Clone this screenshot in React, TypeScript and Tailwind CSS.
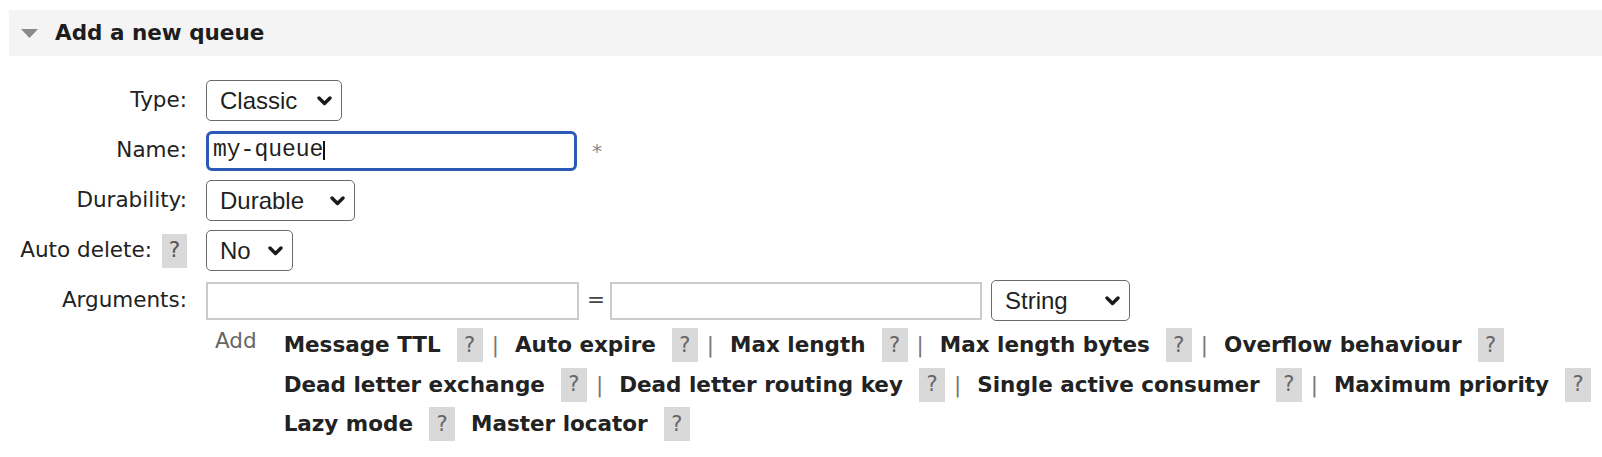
import React from "react";

function Chevron() {
    return (
        <svg width="15" height="10" viewBox="0 0 15 10" className="shrink-0">
            <path d="M2 2 L7.5 7.5 L13 2" fill="none" stroke="#1a1a1a" strokeWidth="3.4" strokeLinecap="round" strokeLinejoin="round" />
        </svg>
    );
}

function FakeSelect({ value, width }: { value: string; width: string }) {
    return (
        <div className={`${width} h-[41px] flex items-center justify-between bg-white border border-[#6b6b6b] rounded-[5px] pl-[13px] pr-[9px] font-['Liberation_Sans',Arial,sans-serif] text-[24px] text-[#1f1f1f]`}>
            <span>{value}</span>
            <Chevron />
        </div>
    );
}

function Help() {
    return (
        <span className="ml-[16px] w-[26px] h-[34px] bg-[#d9d9d9] flex items-center justify-center text-[#666] font-normal text-[21px]">
            ?
        </span>
    );
}

function Pipe() {
    return <span className="ml-[9px] mr-[16px] text-[#777] font-normal">|</span>;
}

function Row({ label, children, help }: { label: string; children: React.ReactNode; help?: boolean }) {
    return (
        <div className="flex items-center h-[50px]">
            <div className="w-[187px] flex justify-end items-center">
                <span>{label}</span>
                {help && (
                    <span className="ml-[10px] w-[25px] h-[34px] bg-[#d9d9d9] flex items-center justify-center text-[#555]">?</span>
                )}
            </div>
            <div className="ml-[19px] flex items-center">{children}</div>
        </div>
    );
}

// argument shortcuts, one array per line
const lines: { name: string; pipe: boolean }[][] = [
    [
        { name: "Message TTL", pipe: true },
        { name: "Auto expire", pipe: true },
        { name: "Max length", pipe: true },
        { name: "Max length bytes", pipe: true },
        { name: "Overflow behaviour", pipe: false },
    ],
    [
        { name: "Dead letter exchange", pipe: true },
        { name: "Dead letter routing key", pipe: true },
        { name: "Single active consumer", pipe: true },
        { name: "Maximum priority", pipe: false },
    ],
    [
        { name: "Lazy mode", pipe: false },
        { name: "Master locator", pipe: false },
    ],
];

export default function App() {
    return (
        <div className="w-[1602px] h-[457px] bg-white font-['DejaVu_Sans',Verdana,sans-serif] text-[21.5px] text-[#222] overflow-hidden">
            <div className="pt-[10px] pl-[9px]">
                <div className="h-[46px] bg-[#f4f4f4] flex items-center">
                    <svg width="17" height="9" viewBox="0 0 17 9" className="ml-[12px]">
                        <path d="M0 0 L17 0 L8.5 9 Z" fill="#8a8a8a" />
                    </svg>
                    <h2 className="ml-[17px] font-bold text-[21.5px] text-[#1d1d1d]">Add a new queue</h2>
                </div>
            </div>

            <div className="mt-[19.5px]">
                <Row label="Type:">
                    <FakeSelect value="Classic" width="w-[136px]" />
                </Row>
                <Row label="Name:">
                    <div className="w-[371px] h-[40px] border-[3px] border-[#2a59b6] rounded-[6px] flex items-center pl-[4px] font-['Liberation_Mono',monospace] text-[23px] text-[#1f1f1f]">
                        <span>my-queue</span>
                        <span className="w-[1.5px] h-[19px] bg-[#111]" />
                    </div>
                    <span className="ml-[15px] text-[#888] text-[20px]">*</span>
                </Row>
                <Row label="Durability:">
                    <FakeSelect value="Durable" width="w-[149px]" />
                </Row>
                <Row label="Auto delete:" help>
                    <FakeSelect value="No" width="w-[87px]" />
                </Row>
                <Row label="Arguments:">
                    <div className="w-[373px] h-[38px] border-2 border-[#cbcbcb] bg-white" />
                    <span className="ml-[8px] mr-[5px] text-[#444]">=</span>
                    <div className="w-[372px] h-[38px] border-2 border-[#cbcbcb] bg-white" />
                    <div className="ml-[9px]">
                        <FakeSelect value="String" width="w-[139px]" />
                    </div>
                </Row>
            </div>

            <div className="flex pl-[215px]">
                <div className="h-[39.5px] flex items-center -mt-[4px] text-[#666]">Add</div>
                <div className="ml-[27px] flex flex-col">
                    {lines.map((line, i) => (
                        <div key={i} className="h-[39.5px] flex items-center font-bold whitespace-nowrap">
                            {line.map((item) => (
                                <React.Fragment key={item.name}>
                                    <span>{item.name}</span>
                                    <Help />
                                    {item.pipe ? <Pipe /> : <span className="w-[16px]" />}
                                </React.Fragment>
                            ))}
                        </div>
                    ))}
                </div>
            </div>
        </div>
    );
}
